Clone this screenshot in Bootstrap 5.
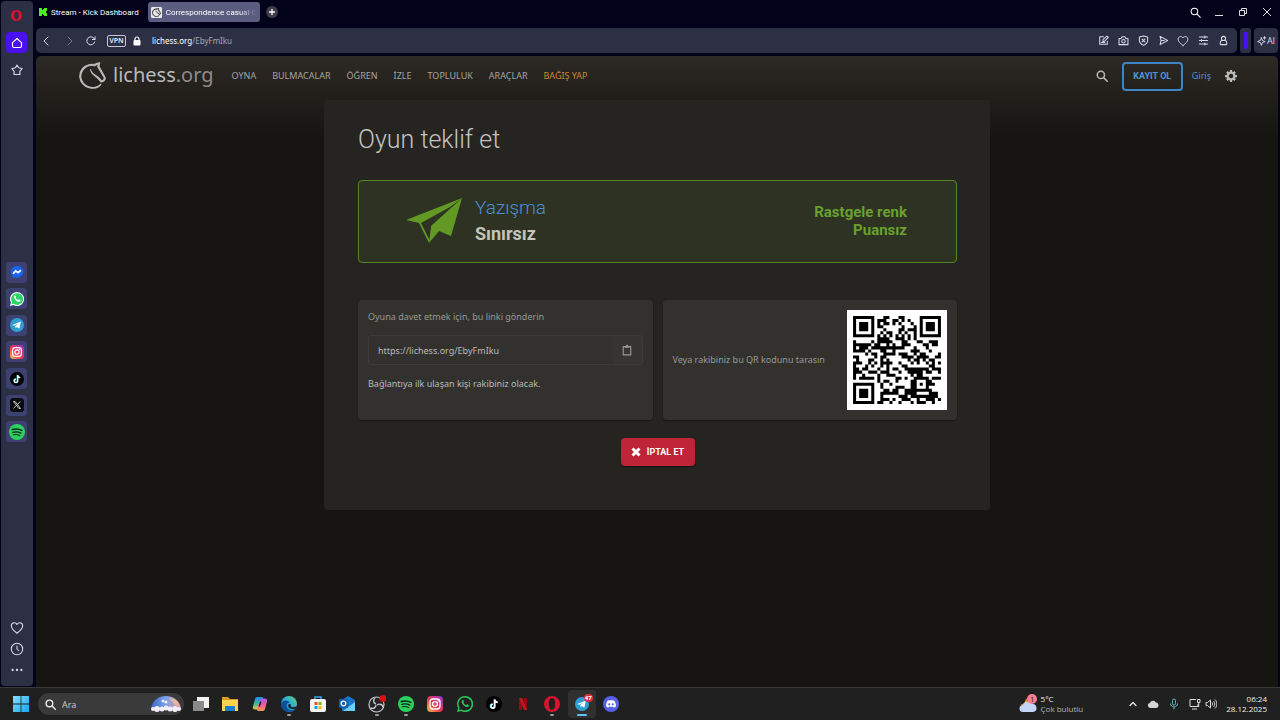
<!DOCTYPE html>
<html lang="tr" data-bs-theme="dark">
<head>
<meta charset="utf-8">
<meta name="viewport" content="width=device-width, initial-scale=1">
<title>Correspondence casual Chess</title>
<link href="https://cdn.jsdelivr.net/npm/bootstrap@5.3.0/dist/css/bootstrap.min.css" rel="stylesheet">
<style>
:root{--bar:#2d3044;--site:#161512;--panel:#262421;--tile:#32312d;--txt:#bababa;--blue:#4f95d6;--green:#629924}
body{background:#02031a;font-family:"Noto Sans",sans-serif;font-size:9px;line-height:16px;color:var(--txt)}
svg{display:block;flex:none}
button{font:inherit;color:inherit;background:none;border:0;padding:0}
a{color:inherit;text-decoration:none}
.line{fill:none;stroke:currentColor;stroke-width:1.5;stroke-linecap:round;stroke-linejoin:round}
.i10{width:10px;height:10px}.i11{width:11px;height:11px}.i12{width:12px;height:12px}.i14{width:14px;height:14px}.i16{width:16px;height:16px}.i18{width:18px;height:18px}
.side{width:32px;margin:1px 0 1px 1px;padding:4px 1px 6px 0;background:var(--bar);border-radius:4px;color:#d8dae6}
.side button{width:21px;height:21px;border-radius:4px;display:grid;place-items:center}
.side .home{background:#4a10f0;color:#fff}
.side .app{background:#3c4171}
.apps{height:188px;padding-top:7px}
.content{min-width:0;margin-left:3px}
.tabs{height:28px;padding-right:1px;font:8px Roboto,sans-serif;color:#fff}
.tab{height:20px;padding:0 3px;border-radius:3px;gap:4px}
.tab.on{background:#5a5c80;width:112px;margin-left:6px}
.tab.on .fade-end{overflow:hidden;white-space:nowrap;flex:1;-webkit-mask-image:linear-gradient(90deg,#000 80%,transparent);mask-image:linear-gradient(90deg,#000 80%,transparent)}
.plus{width:12px;height:12px;border-radius:6px;background:#3d3e48;margin-left:6px}
.wctl button{width:24px;height:24px;display:grid;place-items:center}
.chrome{gap:3px;margin:0 2px 3px 0}
.addr{height:25px;background:var(--bar);border-radius:5px;color:#d8dae6;font:8px "Noto Sans",sans-serif;padding-right:4px}
.addr .go{width:22px;height:22px;display:grid;place-items:center}
.addr .tools button{width:20px;height:20px;display:grid;place-items:center}
.addr .vpn{border:1px solid #c5c7d4;border-radius:2px;width:19px;height:12px;font:bold 7px/10px "Open Sans",sans-serif;margin:0 6px 0 5px}
.urlfield{color:#a4a7b8;margin-left:10px}
.strip{width:11px;height:25px;border-radius:3px;background:var(--bar);display:grid;place-items:center}
.strip i{width:4px;height:17px;background:#4a10f0;border-radius:1px}
.ai{width:24px;height:25px;border-radius:4px;background:var(--bar);font:9px "Open Sans",sans-serif;color:#d8dae6}
.site{margin-right:2px;border-radius:5px 5px 0 0;background:linear-gradient(#2d2924,#161512 80px)}
.top{height:40px;padding:0 41px 0 43px}
.brand{font-size:20px;line-height:30px;gap:7px;padding-bottom:2px}
.brand span span{color:#8c8c8a}
.menu{gap:16px;margin-left:18px;color:#a5a4a1}
.menu .give{color:#c98a26}
.join{border:2px solid #3d84c4;border-radius:4px;width:61px;height:29px;color:#4f95d6;font:bold 9px Roboto,sans-serif;margin:0 9px 0 14px}
.login{color:var(--blue);margin-right:14px}
.challenge{width:100%;max-width:666px;margin:4px auto 176px;padding:24px 33px 44px 34px;background:var(--panel);border-radius:4px}
.challenge h1{font:300 25px/32px Roboto,sans-serif;color:#c4c3c1;margin:0 0 24px}
.game{border:1px solid #588428;border-radius:4px;background:#2d3223;height:83px;padding:0 49px 2px 46px;margin-bottom:37px;font-family:Roboto,sans-serif}
.game .kind{font-size:19px;line-height:26px;font-weight:300;color:#4a8fd6}
.game .time{font-size:18px;line-height:26px;font-weight:700;color:#c4c3be}
.game .mode{font-size:15px;line-height:18px;font-weight:700;color:#69a02e}
.pair{--bs-gutter-x:10px;margin-bottom:18px}
.tilebox{background:var(--tile);border-radius:4px;height:120px;box-shadow:0 1px 2px #0006;padding:9px 10px}
.faint{color:#999894}
.copy{height:30px;border:1px solid #3d3c38;border-radius:3px;margin:10px 0 11px}
.copy input{background:none;border:0;color:#bababa;font:9px "Noto Sans",sans-serif;padding:0 9px;min-width:0}
.copy button{width:29px;background:#363531;color:#999;display:grid;place-items:center}
.cancel{background:#bf2437;color:#fff;border-radius:4px;height:28px;width:74px;font:bold 9px Roboto,sans-serif;box-shadow:0 1px 2px #0007;gap:6px}
.qr{width:100px;height:100px;background:#fff}
.task{height:33px;background:#202020;border-top:1px solid #393939;color:#eee;padding:0 13px 0 9px;font:8px/10px "Open Sans",sans-serif}
.task button{height:28px;width:28px;display:grid;place-items:center;border-radius:3px}
.task .run::after{content:"";position:absolute;bottom:2px;width:4px;height:2px;border-radius:1px;background:#9a9a9a}
.task .live{background:#303030}
.task .live::after{width:10px;background:#60c0f0}
.task .start{width:24px}
.search{width:146px;height:22px;border-radius:11px;background:#3a3a3a;padding:0 1px 0 7px;gap:6px;margin-left:5px;margin-right:3px}
.search input{background:none;border:0;padding:0;min-width:0;color:#ddd;font:9px "Open Sans",sans-serif}
.search input::placeholder{color:#ccc;opacity:1}
.pins{width:438px}
.note{background:#d92f37;color:#fff;border-radius:4px;font:bold 6px/8px "Open Sans",sans-serif;padding:0 1px;top:4px;right:3px}
.weather{gap:4px;margin-right:45px}
.weather .sky{color:#b5b5b5}
.tray{gap:9px}
</style>
</head>
<body class="min-vh-100 d-flex flex-column">
<svg width="0" height="0" class="position-absolute">
<defs>
<linearGradient id="gi" x1="0" y1="1" x2="1" y2="0"><stop offset="0" stop-color="#fdc04b"/><stop offset=".45" stop-color="#f0344f"/><stop offset="1" stop-color="#8b35d8"/></linearGradient>
<linearGradient id="gw" x1="0" y1="0" x2="1" y2="1"><stop offset="0" stop-color="#7fe0fb"/><stop offset="1" stop-color="#18a5ee"/></linearGradient>
<linearGradient id="ge" x1="0" y1="1" x2="1" y2="0"><stop offset="0" stop-color="#0c59a4"/><stop offset=".5" stop-color="#2ba7e0"/><stop offset="1" stop-color="#5fdb6c"/></linearGradient>
<linearGradient id="gc1" x1="0" y1="0" x2="0" y2="1"><stop offset="0" stop-color="#2a86e8"/><stop offset=".6" stop-color="#3cbf93"/><stop offset="1" stop-color="#f0c83a"/></linearGradient>
<linearGradient id="gc2" x1="0" y1="0" x2="0" y2="1"><stop offset="0" stop-color="#a35cf0"/><stop offset=".5" stop-color="#ee5a9d"/><stop offset="1" stop-color="#f59a4a"/></linearGradient>
<linearGradient id="gs" x1="0" y1="0" x2="1" y2="0"><stop offset="0" stop-color="#3a66c8"/><stop offset=".5" stop-color="#7aa2ea"/><stop offset="1" stop-color="#f08c98"/></linearGradient>
</defs>
<symbol id="knight" viewBox="-1 -1 52 52"><path stroke-linejoin="round" d="M38.956.5c-3.53.418-6.452.902-9.286 2.984C5.534 1.786-.692 18.533.68 29.364 3.493 50.214 31.918 55.785 41.329 41.7c-7.444 7.696-19.276 8.752-28.323 3.084C3.959 39.116-.506 27.392 4.683 17.567 9.873 7.742 18.996 4.535 29.03 6.405c2.43-1.418 5.225-3.22 7.655-3.187l-1.694 4.86 12.752 21.37c-.439 5.654-5.459 6.112-5.459 6.112-.574-1.47-1.634-2.942-4.842-6.036-3.207-3.094-17.465-10.177-15.788-16.207-2.001 6.967 10.311 14.152 14.04 17.663 3.73 3.51 5.426 6.04 5.795 6.756 0 0 9.392-2.504 7.838-8.927L37.4 7.171z"/></symbol>
<symbol id="mag" viewBox="0 0 16 16"><g fill="none" stroke="currentColor" stroke-linecap="round"><circle cx="6.5" cy="6.5" r="4.8"/><path d="M10.2 10.2 15 15"/></g></symbol>
<symbol id="heart" viewBox="0 0 16 16"><path class="line" style="stroke-width:1.2" d="M8 14C4 11 1.5 8.500 1.500 5.500 1.500 3.500 3 2 4.800 2 6.200 2 7.400 2.800 8 4 8.600 2.800 9.800 2 11.200 2 13 2 14.500 3.500 14.500 5.500 14.500 8.500 12 11 8 14Z"/></symbol>
<symbol id="wa" viewBox="0 0 16 16"><path fill="#fff" d="M8 0a8 8 0 0 0-6.900 12L0 16l4.100-1.100A8 8 0 1 0 8 0Z"/><path fill="#2bd566" d="M8 1.300a6.700 6.700 0 0 0-5.600 10.300L1.800 14l2.500-.6A6.700 6.700 0 1 0 8 1.300Z"/><path fill="#fff" d="M5.300 4.200c.3-.3.900-.3 1.100.1l.6 1.400c.1.300-.5.900-.5 1.100.6 1.200 1.500 1.900 2.700 2.400.3 0 .8-1 1.100-.9l1.500.8c.3.200 0 1.300-.6 1.700-1.200.8-3.200-.1-4.700-1.500C4.900 7.800 4 5.400 5.300 4.200Z"/></symbol>
<symbol id="wo" viewBox="0 0 16 16"><path fill="#27c95e" d="M8 0a8 8 0 0 0-6.900 12L0 16l4.100-1.100A8 8 0 1 0 8 0Z"/><path fill="#202020" d="M8 1.500a6.500 6.500 0 0 0-5.400 10.100L2 14l2.400-.6A6.500 6.500 0 1 0 8 1.500Z"/><path fill="#27c95e" d="M5.300 4.200c.3-.3.900-.3 1.100.1l.6 1.400c.1.300-.5.900-.5 1.100.6 1.200 1.500 1.900 2.700 2.400.3 0 .8-1 1.100-.9l1.500.8c.3.200 0 1.300-.6 1.700-1.200.8-3.200-.1-4.700-1.500C4.900 7.800 4 5.400 5.300 4.200Z"/></symbol>
<symbol id="tg" viewBox="0 0 16 16"><circle cx="8" cy="8" r="8" fill="#2f9fd3"/><path fill="#fff" d="m2.600 7.900 9.800-3.900-1.700 8.300-2.800-2-1.500 1.500-.4-2.800L10.300 5.800 4.900 8.900Z"/></symbol>
<symbol id="ig" viewBox="0 0 16 16"><rect width="16" height="16" rx="4" fill="url(#gi)"/><g fill="none" stroke="#fff" stroke-width="1.300"><rect x="3" y="3" width="10" height="10" rx="3"/><circle cx="8" cy="8" r="2.400"/></g><circle cx="11" cy="5" r=".8" fill="#fff"/></symbol>
<symbol id="tk" viewBox="0 0 16 16"><circle cx="8" cy="8" r="8" fill="#000"/><g fill="none" stroke-width="1.600"><path stroke="#25d8e0" d="M8.300 3.200v6.700a1.900 1.900 0 1 1-1.900-1.900M8.300 3.500c.2 1.700 1.400 2.600 3 2.700"/><path stroke="#fff" d="M8.800 3.500v6.700a1.900 1.900 0 1 1-1.900-1.900M8.800 3.700c.2 1.700 1.400 2.600 3 2.700"/></g></symbol>
<symbol id="sp" viewBox="0 0 16 16"><circle cx="8" cy="8" r="8" fill="#2bd15d"/><g fill="none" stroke="#10251a" stroke-linecap="round"><path stroke-width="1.600" d="M3.300 5.600c3.200-1 6.800-.7 9.500.8"/><path stroke-width="1.400" d="M3.800 8.300c2.800-.8 5.600-.5 8 .8"/><path stroke-width="1.100" d="M4.300 10.800c2.400-.6 4.500-.4 6.500.8"/></g></symbol>
<symbol id="opera" viewBox="0 0 16 16"><path fill="#d81430" fill-rule="evenodd" d="M8 0a8 8 0 1 0 0 16A8 8 0 1 0 8 0Zm0 2c2 0 3.200 2.600 3.200 6S10 14 8 14s-3.200-2.600-3.200-6S6 2 8 2Z"/></symbol>
</svg>

<div class="d-flex flex-grow-1">
<aside class="side d-flex flex-column align-items-center justify-content-between" aria-label="Kenar çubuğu">
<div class="d-grid" style="gap:6px">
<button aria-label="Opera"><svg class="i11"><use href="#opera"/></svg></button>
<button class="home" aria-label="Ana sayfa"><svg class="i12" viewBox="0 0 16 16"><path class="line" d="M2 7.500 8 2l6 5.500V12a2 2 0 0 1-2 2H4a2 2 0 0 1-2-2Z"/></svg></button>
<button aria-label="Yer imleri"><svg class="i12" viewBox="0 0 16 16"><path class="line" d="m8 1.500 2.200 3.600 4.600 1-3 3.600.2 4.300H4l.2-4.300-3-3.600 4.600-1Z"/></svg></button>
</div>
<div class="apps d-flex flex-column justify-content-between">
<button class="app" aria-label="Messenger"><svg class="i14" viewBox="0 0 16 16"><path fill="#1763ea" d="M8 1a7 6.800 0 0 0-5 11.500V15l2.300-1A7 6.800 0 1 0 8 1Z"/><path fill="none" stroke="#fff" stroke-width="2" d="m3.500 10 3-3.300 2.700 2L12.500 6"/></svg></button>
<button class="app" aria-label="WhatsApp"><svg class="i14"><use href="#wa"/></svg></button>
<button class="app" aria-label="Telegram"><svg class="i14"><use href="#tg"/></svg></button>
<button class="app" aria-label="Instagram"><svg class="i14"><use href="#ig"/></svg></button>
<button class="app" aria-label="TikTok"><svg class="i14"><use href="#tk"/></svg></button>
<button class="app" aria-label="X"><svg class="i14" viewBox="0 0 16 16"><rect width="16" height="16" rx="4" fill="#0b0b0d"/><path fill="none" stroke="#ddd" d="M4 4h1.800L12 12h-1.800ZM11.800 4 8.500 7.500M4 12l3.400-3.700"/></svg></button>
<button class="app" aria-label="Spotify"><svg class="i16"><use href="#sp"/></svg></button>
</div>
<div class="d-grid">
<button aria-label="Favoriler"><svg class="i14"><use href="#heart"/></svg></button>
<button aria-label="Geçmiş"><svg class="i14" viewBox="0 0 16 16"><g class="line" style="stroke-width:1.200"><circle cx="8" cy="8" r="6.500"/><path d="M8 4.500V8l2 2"/></g></svg></button>
<button aria-label="Diğer"><svg class="i14" viewBox="0 0 16 16" fill="currentColor"><circle cx="3" cy="8" r="1.300"/><circle cx="8" cy="8" r="1.300"/><circle cx="13" cy="8" r="1.300"/></svg></button>
</div>
</aside>

<div class="content flex-grow-1 d-flex flex-column">
<div class="tabs d-flex align-items-center pb-1">
<div class="tab d-flex align-items-center"><svg width="8" height="8" viewBox="0 0 8 8"><path fill="#4df01a" d="M0 0h3v2h1V1h1V0h3v3H7v1H6v0h1v1h1v3H5V7H4V6H3v2H0Z"/></svg><span class="text-nowrap">Stream - Kick Dashboard</span></div>
<div class="tab on d-flex align-items-center"><svg class="i11" viewBox="0 0 50 50"><rect width="50" height="50" rx="6" fill="#e8e8ea"/><svg x="5" y="5" width="40" height="40" stroke="#222" stroke-width="2"><use href="#knight"/></svg></svg><span class="fade-end">Correspondence casual Ch</span></div>
<button class="plus" aria-label="Yeni sekme"><svg class="i12" viewBox="0 0 12 12"><path stroke="#fff" stroke-width="1.300" d="M6 3v6M3 6h6"/></svg></button>
<div class="wctl d-flex ms-auto">
<button aria-label="Ara"><svg class="i11"><use href="#mag" stroke-width="1.500"/></svg></button>
<button aria-label="Küçült"><svg class="i10" viewBox="0 0 10 10"><path stroke="#ddd" d="M1 8.500h8"/></svg></button>
<button aria-label="Geri yükle"><svg class="i10" viewBox="0 0 10 10"><path fill="none" stroke="#ddd" d="M1.500 3.500h5v5h-5ZM3.500 3.500v-2h5v5h-2"/></svg></button>
<button aria-label="Kapat"><svg class="i10" viewBox="0 0 10 10"><path stroke="#ddd" d="m1 1 8 8M9 1 1 9"/></svg></button>
</div>
</div>

<div class="chrome d-flex">
<div class="addr flex-grow-1 d-flex align-items-center">
<button class="go" aria-label="Geri"><svg class="i10" viewBox="0 0 10 10"><path class="line" style="stroke-width:1" d="M6 1 2 5l4 4"/></svg></button>
<button class="go" aria-label="İleri"><svg class="i10" viewBox="0 0 10 10" opacity=".4"><path class="line" style="stroke-width:1" d="m4 1 4 4-4 4"/></svg></button>
<button class="go" aria-label="Yenile"><svg class="i10" viewBox="0 0 10 10"><path class="line" style="stroke-width:1" d="M8.700 6A4 4 0 1 1 8 2.400L9 3.500M9 .8v2.700H6.300"/></svg></button>
<button class="vpn">VPN</button>
<svg class="i10" viewBox="0 0 10 10"><rect x="1.500" y="4" width="7" height="5.500" rx="1" fill="#fff"/><path fill="none" stroke="#fff" stroke-width="1.200" d="M3 4.500V3a2 2 0 0 1 4 0v1.500"/></svg>
<a class="urlfield" href="#"><span class="text-white">lichess.org</span>/EbyFmIku</a>
<div class="tools d-flex ms-auto">
<button aria-label="Düzenle"><svg class="i11" viewBox="0 0 16 16"><path class="line" d="M8 2.500H2.500v11h11V9M7 9.500l.5-3 5.500-5 2 2-5.500 5.500ZM5 11h5"/></svg></button>
<button aria-label="Ekran görüntüsü"><svg class="i11" viewBox="0 0 16 16"><g class="line"><path d="M1.500 5H4.500L6 2.500h4L11.500 5h3v9h-13Z"/><circle cx="8" cy="9" r="2.500"/></g></svg></button>
<button aria-label="Engelleyici"><svg class="i11" viewBox="0 0 16 16"><path class="line" d="M8 1.500 14 3v5c0 3.500-2.500 5.500-6 7-3.500-1.500-6-3.500-6-7V3ZM6 6l4 4M10 6l-4 4"/></svg></button>
<button aria-label="Gönder"><svg class="i11" viewBox="0 0 16 16"><path class="line" d="m3 2 11 6-11 6 1.500-6ZM4.500 8H9"/></svg></button>
<button aria-label="Favori"><svg class="i12"><use href="#heart"/></svg></button>
<button aria-label="Ayarlar"><svg class="i11" viewBox="0 0 16 16"><path class="line" d="M2 3h12M2 8h12M2 13h12M10 1.500v3M5 6.500v3M10 11.500v3"/></svg></button>
<button aria-label="Profil"><svg class="i11" viewBox="0 0 16 16"><g class="line"><circle cx="8" cy="5" r="3"/><path d="M5.500 7.500C2.500 9.500 3 14 4 14h8c1 0 1.500-4.500-1.500-6.500"/></g></svg></button>
</div>
</div>
<div class="strip"><i></i></div>
<button class="ai d-flex align-items-center justify-content-center" aria-label="AI"><svg class="i10" viewBox="0 0 16 16"><path class="line" d="m7 3 1.500 4L13 9l-4.500 1.500L7 15l-1.500-4.500L1 9l4.500-2ZM12 1v4M10 3h4"/></svg>AI</button>
</div>

<div class="site flex-grow-1">
<header class="top d-flex align-items-center">
<a class="brand d-flex align-items-center" href="#"><svg width="27" height="27" fill="#bababa" stroke="#bababa" stroke-width="2"><use href="#knight"/></svg><span>lichess<span>.org</span></span></a>
<nav class="menu d-flex text-nowrap"><a href="#">OYNA</a><a href="#">BULMACALAR</a><a href="#">ÖĞREN</a><a href="#">İZLE</a><a href="#">TOPLULUK</a><a href="#">ARAÇLAR</a><a class="give" href="#">BAĞIŞ YAP</a></nav>
<div class="ms-auto d-flex align-items-center">
<button aria-label="Ara"><svg class="i12"><use href="#mag" stroke-width="2"/></svg></button>
<button class="join">KAYIT OL</button>
<a class="login" href="#">Giriş</a>
<button aria-label="Tercihler"><svg class="i12" viewBox="0 0 16 16"><circle cx="8" cy="8" r="4.500" fill="none" stroke="#bababa" stroke-width="3"/><path stroke="#bababa" stroke-width="3" d="M8 0v3M8 13v3M0 8h3M13 8h3M2.500 2.500l2 2M11.500 11.500l2 2M13.500 2.500l-2 2M4.500 11.500l-2 2"/></svg></button>
</div>
</header>

<main class="challenge">
<h1>Oyun teklif et</h1>
<section class="game d-flex align-items-center">
<svg width="58" height="48" viewBox="0 0 58 48"><path fill="#629924" d="M1 23 57 1 24 26 24 46 14 26ZM57 1 46 39 34 34 24 46 26 29Z"/><path fill="#2d3223" d="m16 26 29-16-19 18-2 14Z"/></svg>
<div class="ms-2 ps-1"><div class="kind">Yazışma</div><div class="time">Sınırsız</div></div>
<div class="mode ms-auto text-end">Rastgele renk<br>Puansız</div>
</section>
<div class="row pair">
<div class="col-6"><div class="tilebox">
<label class="faint d-block" for="invite">Oyuna davet etmek için, bu linki gönderin</label>
<div class="copy d-flex"><input id="invite" class="flex-grow-1" type="text" value="https://lichess.org/EbyFmIku" readonly><button aria-label="Kopyala"><svg class="i12" viewBox="0 0 16 16"><path class="line" d="M3 3.500h10v11H3Z"/><path fill="currentColor" d="M5 2.500h1.500a1.500 1.500 0 0 1 3 0H11v2.500H5Z"/></svg></button></div>
<div>Bağlantıya ilk ulaşan kişi rakibiniz olacak.</div>
</div></div>
<div class="col-6"><div class="tilebox d-flex align-items-center justify-content-between"><span class="faint">Veya rakibiniz bu QR kodunu tarasın</span><svg class="qr" id="qr" viewBox="0 0 33 33" role="img" aria-label="QR"></svg></div></div>
</div>
<button class="cancel d-flex align-items-center justify-content-center mx-auto"><svg width="10" height="10" viewBox="0 0 10 10"><path stroke="#fff" stroke-width="3" d="m1.500 1.500 7 7M8.500 1.500l-7 7"/></svg>İPTAL ET</button>
</main>
</div>
</div>
</div>

<footer class="task d-flex align-items-center">
<button class="start" aria-label="Başlat"><svg class="i16" viewBox="0 0 16 16"><path fill="url(#gw)" d="M0 0h7.600v7.600H0ZM8.400 0H16v7.600H8.400ZM0 8.400h7.600V16H0ZM8.400 8.400H16V16H8.400Z"/></svg></button>
<div class="search d-flex align-items-center"><svg class="i11"><use href="#mag" stroke-width="2"/></svg><input class="flex-grow-1" type="text" placeholder="Ara" aria-label="Ara"><svg width="34" height="18" viewBox="0 0 34 18"><path fill="url(#gs)" d="M2 14C3 5 10 1 17 1s14 4 15 13Z"/><path fill="#f3cf9a" d="M20 3c6 0 10 4 11 9l-5-2Z" opacity=".6"/><g fill="#f1eef8"><circle cx="4" cy="14" r="2"/><circle cx="8" cy="14" r="3"/><circle cx="13" cy="14" r="2.500"/><circle cx="17" cy="13" r="2.500"/><circle cx="21" cy="14" r="2.500"/><circle cx="26" cy="14" r="3"/><circle cx="30" cy="14" r="2"/><circle cx="14" cy="6" r="1.500"/><circle cx="17" cy="7" r="1.500"/></g></svg></div>
<div class="pins d-flex justify-content-between">
<button aria-label="Görev görünümü"><svg class="i18" viewBox="0 0 18 18"><path fill="#f2f2f2" d="M5 2h12v11H5Z"/><path fill="#8a8a8a" d="M1 6h11v10H1Z"/></svg></button>
<button aria-label="Dosya Gezgini"><svg class="i18" viewBox="0 0 18 18"><path fill="#d99a1e" d="M1 2h6l2 2h8v6H1Z"/><path fill="#fcd250" d="M1 5h16v11H1Z"/><path fill="#1a80c8" d="M4 16v-4a1 1 0 0 1 1-1h8a1 1 0 0 1 1 1v4Z"/></svg></button>
<button aria-label="Copilot"><svg class="i16" viewBox="0 0 16 16"><path fill="url(#gc1)" d="M5 1h5c1 0 1.500 1 1 2L8.500 11c-.4 1.500-1.500 2.500-3 2.500H3C1 13.500.5 12 1 10.500L3 3c.3-1.200 1-2 2-2Z"/><path fill="url(#gc2)" d="M11 15H6c-1 0-1-1-.7-2L7.500 5c.4-1.500 1.500-2.500 3-2.500H13c2 0 2.500 1.500 2 3L13 13c-.3 1.200-1 2-2 2Z"/><path fill="#202020" d="M8 5.500h1.500L8 10.500H6.500Z"/></svg></button>
<button class="run position-relative" aria-label="Edge"><svg class="i16" viewBox="0 0 16 16"><circle cx="8" cy="8" r="8" fill="url(#ge)"/><path fill="#0d4f96" d="M0 8c1-4 7-5 9-1-3-1-5 3-2 6 2 2 5 1.500 7 .3C10 18 0 16 0 8Z"/><path fill="#202020" d="M9.500 8c1 1.500-.5 2 .3 2.600 1.500 1 4 .8 6-.6l-1.500 3c-4 1-8-1.500-7-4.500Z"/></svg></button>
<button aria-label="Store"><svg class="i18" viewBox="0 0 18 18"><path fill="none" stroke="#34a5e8" stroke-width="1.500" d="M6 5V2h6v3"/><rect x="1" y="4" width="16" height="13" rx="2" fill="#f4f4f4"/><path fill="#f25022" d="M5.500 7h3v3h-3Z"/><path fill="#7fba00" d="M9.500 7h3v3h-3Z"/><path fill="#00a4ef" d="M5.500 11h3v3h-3Z"/><path fill="#ffb900" d="M9.500 11h3v3h-3Z"/></svg></button>
<button aria-label="Outlook"><svg class="i18" viewBox="0 0 18 18"><path fill="#1577c9" d="M4 5 10 1l7 4v11H4Z"/><path fill="#6fd0f5" d="M5 16 17 7v9Z"/><rect x="1" y="4" width="9" height="9" rx="1" fill="#0f5fae"/><circle cx="5.500" cy="8.500" r="2.300" fill="none" stroke="#fff" stroke-width="1.300"/></svg></button>
<button class="run position-relative" aria-label="OBS"><svg class="i18" viewBox="0 0 18 18"><circle cx="8.500" cy="9.500" r="7.500" fill="#242428" stroke="#c8c8c8" stroke-width="1.200"/><g fill="none" stroke="#c8c8c8" stroke-width="1.400"><path d="M8 9C5 8 5 5 7 3M9 10c3-2 6 0 6 2M8 10c0 3-3 4-5 3"/></g><circle cx="15" cy="3.500" r="3.500" fill="#e00b12"/></svg></button>
<button class="run position-relative" aria-label="Spotify"><svg class="i16"><use href="#sp"/></svg></button>
<button aria-label="Instagram"><svg class="i16"><use href="#ig"/></svg></button>
<button aria-label="WhatsApp"><svg class="i16"><use href="#wo"/></svg></button>
<button aria-label="TikTok"><svg class="i16"><use href="#tk"/></svg></button>
<button aria-label="Netflix"><svg class="i12" viewBox="0 0 12 12"><path fill="#8c0d14" d="M2 0h3v12H2ZM7 0h3v12H7Z"/><path fill="#c31420" d="M2 0h3l5 12H7Z"/></svg></button>
<button class="run position-relative" aria-label="Opera"><svg class="i16"><use href="#opera"/></svg></button>
<button class="run live position-relative" aria-label="Telegram"><svg class="i14"><use href="#tg"/></svg><span class="note position-absolute">47</span></button>
<button aria-label="Discord"><svg class="i16" viewBox="0 0 16 16"><circle cx="8" cy="8" r="8" fill="#5661e8"/><path fill="#fff" d="M4.500 4.800C6 4 10 4 11.500 4.800c1 1.700 1.500 3.700 1.400 5.700-1 .8-1.900 1-2.400 1.100l-.6-1c-1.200.3-2.600.3-3.800 0l-.6 1c-.5-.1-1.400-.3-2.400-1.100-.1-2 .4-4 1.400-5.700Z"/><circle cx="6.200" cy="8.300" r="1.100" fill="#5661e8"/><circle cx="9.800" cy="8.300" r="1.100" fill="#5661e8"/></svg></button>
</div>
<div class="weather ms-auto d-flex align-items-center">
<svg width="18" height="20" viewBox="0 0 18 20"><path fill="#f5a623" d="M1 11A7 7 0 0 0 7 4l3 7Z"/><path fill="#c3d6f5" d="M4 18a3.500 3.500 0 0 1 0-7 5 5 0 0 1 9-1 4 4 0 0 1 1 8Z"/><circle cx="13" cy="5" r="5" fill="#f87f92"/><text x="11" y="8" font-size="8" fill="#222">1</text></svg>
<div>5°C<br><span class="sky">Çok bulutlu</span></div>
</div>
<div class="tray d-flex align-items-center">
<svg class="i10" viewBox="0 0 10 10"><path class="line" style="stroke-width:1.200" d="m2 6.500 3-3 3 3"/></svg>
<svg class="i12" viewBox="0 0 12 12"><path fill="#d5d5d5" d="M3 10a2.700 2.700 0 0 1 0-5.300A3.300 3.300 0 0 1 9 4.500 2.800 2.800 0 0 1 9.500 10Z"/></svg>
<svg class="i12" viewBox="0 0 12 12"><g fill="none" stroke="#62aebb"><rect x="4.500" y="1" width="3" height="6" rx="1.500"/><path d="M2.500 5.500c0 4.500 7 4.500 7 0M6 9v2.500"/></g></svg>
<div class="d-flex gap-1"><svg class="i12" viewBox="0 0 12 12"><path fill="none" stroke="#ddd" d="M7 1.500H1v7h8V6M3 11h5M8.500 1.500h2.500v3H8.500ZM9.700 4.500V9"/></svg>
<svg class="i12" viewBox="0 0 12 12"><path fill="none" stroke="#ddd" d="M1 4.500h1.500L5.500 2v8L2.500 7.500H1ZM7 4.500c.8.800.8 2.200 0 3M8.500 3c1.700 1.700 1.700 4.300 0 6M10 1.500c2.500 2.500 2.500 6.500 0 9"/></svg></div>
<div class="text-end">06:24<br>28.12.2025</div>
</div>
</footer>
<script src="https://cdn.jsdelivr.net/npm/bootstrap@5.3.0/dist/js/bootstrap.bundle.min.js"></script>
<script>
// QR encoder: byte mode, version 3, error correction M
const N = 29;
function encode(text, mask) {
  const m = [], f = [];
  for (let i = 0; i < N; i++) { m.push(Array(N).fill(0)); f.push(Array(N).fill(0)); }
  const set = (x, y, v) => { if (x < 0 || y < 0 || x >= N || y >= N) return; m[y][x] = v ? 1 : 0; f[y][x] = 1; };
  for (let i = 0; i < N; i++) { set(6, i, i % 2 == 0); set(i, 6, i % 2 == 0); }
  for (const [cx, cy] of [[3, 3], [N - 4, 3], [3, N - 4]])
    for (let a = -4; a <= 4; a++) for (let b = -4; b <= 4; b++) { const d = Math.max(Math.abs(a), Math.abs(b)); set(cx + a, cy + b, d != 2 && d != 4); }
  for (let a = -2; a <= 2; a++) for (let b = -2; b <= 2; b++) set(22 + a, 22 + b, Math.max(Math.abs(a), Math.abs(b)) != 1);
  let rem = mask;
  for (let i = 0; i < 10; i++) rem = (rem << 1) ^ ((rem >> 9) * 0x537);
  const fb = (mask << 10 | rem) ^ 0x5412, B = i => fb >> i & 1;
  for (let i = 0; i < 6; i++) set(8, i, B(i));
  set(8, 7, B(6)); set(8, 8, B(7)); set(7, 8, B(8));
  for (let i = 9; i < 15; i++) set(14 - i, 8, B(i));
  for (let i = 0; i < 8; i++) set(N - 1 - i, 8, B(i));
  for (let i = 8; i < 15; i++) set(8, N - 15 + i, B(i));
  set(8, N - 8, 1);
  let bits = '0100' + [text.length, ...[...text].map(c => c.charCodeAt(0))].map(n => n.toString(2).padStart(8, '0')).join('') + '0000';
  const cw = bits.match(/.{8}/g).map(b => parseInt(b, 2));
  for (let p = 0; cw.length < 44; p++) cw.push(p % 2 ? 0x11 : 0xec);
  const mul = (x, y) => { let z = 0; for (let i = 7; i >= 0; i--) { z = (z << 1) ^ ((z >> 7) * 0x11d); z ^= (y >> i & 1) * x; } return z; };
  const g = Array(26).fill(0); g[25] = 1;
  let r = 1;
  for (let i = 0; i < 26; i++) { for (let j = 0; j < 26; j++) { g[j] = mul(g[j], r); if (j < 25) g[j] ^= g[j + 1]; } r = mul(r, 2); }
  const e = Array(26).fill(0);
  for (const b of cw) { const k = b ^ e.shift(); e.push(0); g.forEach((c, i) => e[i] ^= mul(c, k)); }
  const out = cw.concat(e);
  let i = 0;
  for (let R = N - 1; R >= 1; R -= 2) {
    if (R == 6) R = 5;
    for (let v = 0; v < N; v++) for (let j = 0; j < 2; j++) {
      const x = R - j, y = ((R + 1) & 2) == 0 ? N - 1 - v : v;
      if (f[y][x]) continue;
      if (i < out.length * 8) m[y][x] = out[i >> 3] >> (7 - (i & 7)) & 1;
      i++;
      if ([(x + y) % 2, y % 2, x % 3, (x + y) % 3, ((x / 3 | 0) + (y / 2 | 0)) % 2, x * y % 2 + x * y % 3, (x * y % 2 + x * y % 3) % 2, ((x + y) % 2 + x * y % 3) % 2][mask] == 0) m[y][x] ^= 1;
    }
  }
  return m;
}
function penalty(m) {
  let p = 0, dark = 0;
  const cols = m.map((_, x) => m.map(r => r[x]));
  for (const line of [...m, ...cols]) {
    const s = line.join('');
    for (const run of s.match(/0{5,}|1{5,}/g) || []) p += run.length - 2;
    for (let i = 0; i + 11 <= N; i++) { const t = s.substr(i, 11); if (t == '10111010000' || t == '00001011101') p += 40; }
  }
  for (let y = 0; y < N; y++) for (let x = 0; x < N; x++) {
    dark += m[y][x];
    if (x && y && m[y][x] == m[y - 1][x] && m[y][x] == m[y][x - 1] && m[y][x] == m[y - 1][x - 1]) p += 3;
  }
  return p + Math.floor(Math.abs(dark / N / N * 20 - 10)) * 10;
}
const best = [0, 1, 2, 3, 4, 5, 6, 7].map(k => encode(document.getElementById('invite').value, k)).sort((a, b) => penalty(a) - penalty(b))[0];
let d = '';
best.forEach((row, y) => row.forEach((c, x) => { if (c) d += `M${x + 2} ${y + 2}h1v1h-1z`; }));
document.getElementById('qr').innerHTML = `<path d="${d}"/>`;
</script>
</body>
</html>
